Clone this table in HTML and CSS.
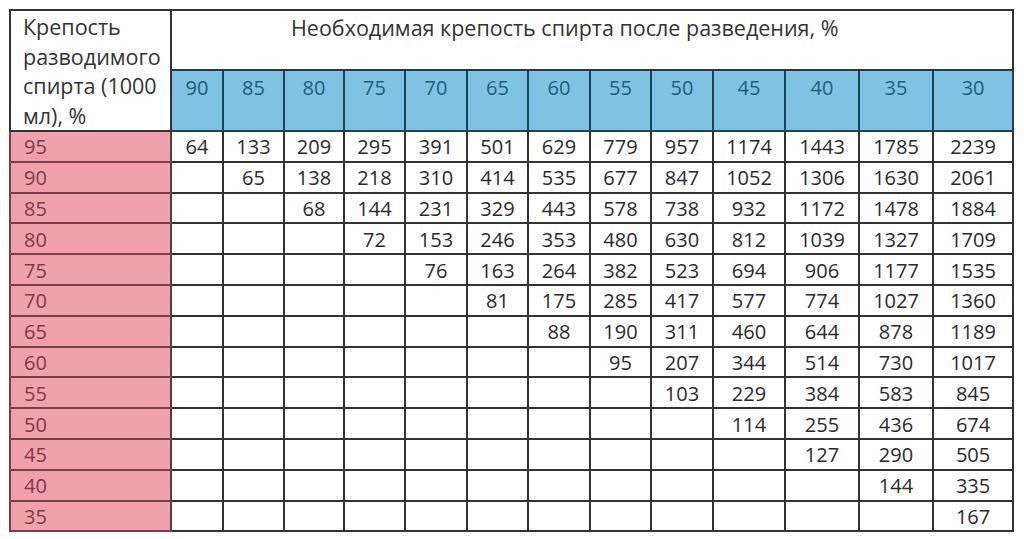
FILE: index.html
```html
<!DOCTYPE html>
<html lang="ru">
<head>
<meta charset="utf-8">
<link rel="stylesheet" href="styles.css">
</head>
<body>
<table class="tbl">
<colgroup>
<col class="c-label"><col class="c52"><col class="c61"><col class="c60"><col class="c61"><col class="c62"><col class="c61"><col class="c62"><col class="c61"><col class="c62"><col class="c72"><col class="c74"><col class="c74"><col class="c80">
</colgroup>
<tr class="r-title">
<th class="corner" rowspan="2">Крепость<br>разводимого<br>спирта (1000<br>мл), %</th>
<th class="title" colspan="13">Необходимая крепость спирта после разведения, %</th>
</tr>
<tr class="r-head">
<th class="h">90</th><th class="h">85</th><th class="h">80</th><th class="h">75</th><th class="h">70</th><th class="h">65</th><th class="h">60</th><th class="h">55</th><th class="h">50</th><th class="h">45</th><th class="h">40</th><th class="h">35</th><th class="h">30</th>
</tr>
<tr class="r-data"><th class="lab">95</th><td>64</td><td>133</td><td>209</td><td>295</td><td>391</td><td>501</td><td>629</td><td>779</td><td>957</td><td>1174</td><td>1443</td><td>1785</td><td>2239</td></tr>
<tr class="r-data"><th class="lab">90</th><td></td><td>65</td><td>138</td><td>218</td><td>310</td><td>414</td><td>535</td><td>677</td><td>847</td><td>1052</td><td>1306</td><td>1630</td><td>2061</td></tr>
<tr class="r-data"><th class="lab">85</th><td></td><td></td><td>68</td><td>144</td><td>231</td><td>329</td><td>443</td><td>578</td><td>738</td><td>932</td><td>1172</td><td>1478</td><td>1884</td></tr>
<tr class="r-data"><th class="lab">80</th><td></td><td></td><td></td><td>72</td><td>153</td><td>246</td><td>353</td><td>480</td><td>630</td><td>812</td><td>1039</td><td>1327</td><td>1709</td></tr>
<tr class="r-data"><th class="lab">75</th><td></td><td></td><td></td><td></td><td>76</td><td>163</td><td>264</td><td>382</td><td>523</td><td>694</td><td>906</td><td>1177</td><td>1535</td></tr>
<tr class="r-data"><th class="lab">70</th><td></td><td></td><td></td><td></td><td></td><td>81</td><td>175</td><td>285</td><td>417</td><td>577</td><td>774</td><td>1027</td><td>1360</td></tr>
<tr class="r-data"><th class="lab">65</th><td></td><td></td><td></td><td></td><td></td><td></td><td>88</td><td>190</td><td>311</td><td>460</td><td>644</td><td>878</td><td>1189</td></tr>
<tr class="r-data"><th class="lab">60</th><td></td><td></td><td></td><td></td><td></td><td></td><td></td><td>95</td><td>207</td><td>344</td><td>514</td><td>730</td><td>1017</td></tr>
<tr class="r-data"><th class="lab">55</th><td></td><td></td><td></td><td></td><td></td><td></td><td></td><td></td><td>103</td><td>229</td><td>384</td><td>583</td><td>845</td></tr>
<tr class="r-data"><th class="lab">50</th><td></td><td></td><td></td><td></td><td></td><td></td><td></td><td></td><td></td><td>114</td><td>255</td><td>436</td><td>674</td></tr>
<tr class="r-data"><th class="lab">45</th><td></td><td></td><td></td><td></td><td></td><td></td><td></td><td></td><td></td><td></td><td>127</td><td>290</td><td>505</td></tr>
<tr class="r-data"><th class="lab">40</th><td></td><td></td><td></td><td></td><td></td><td></td><td></td><td></td><td></td><td></td><td></td><td>144</td><td>335</td></tr>
<tr class="r-data"><th class="lab">35</th><td></td><td></td><td></td><td></td><td></td><td></td><td></td><td></td><td></td><td></td><td></td><td></td><td>167</td></tr>
</table>
</body>
</html>
```
FILE: styles.css
```css
html, body {
  margin: 0;
  padding: 0;
  background: #ffffff;
}
body {
  padding: 9px 0 0 9px;
  font-family: "Open Sans", "Liberation Sans", sans-serif;
  font-size: 20px;
  color: #2b2b2b;
}
.tbl {
  border-collapse: collapse;
  table-layout: fixed;
  width: 1004px;
  border: 2px solid #4a4a4a;
}
.c-label { width: 161px; }
.c52 { width: 52px; }
.c60 { width: 60px; }
.c61 { width: 61px; }
.c62 { width: 62px; }
.c72 { width: 72px; }
.c74 { width: 74px; }
.c80 { width: 80px; }
.tbl th, .tbl td {
  border: 2px solid #333333;
  padding: 0;
  font-weight: normal;
  line-height: 26px;
}
.tbl .r-title { height: 60px; }
.tbl .r-head { height: 61px; }
.tbl .r-data { height: 30.8px; }
.tbl .corner {
  text-align: left;
  vertical-align: top;
  padding: 1px 0 0 12px;
  font-size: 21.5px;
  line-height: 29.5px;
  white-space: nowrap;
  color: #333333;
}
.tbl .title {
  text-align: left;
  vertical-align: top;
  padding: 4px 0 0 119px;
  font-size: 21.5px;
  white-space: nowrap;
  color: #333333;
}
.tbl .h {
  background: #7fc2e3;
  color: #1f5f7e;
  vertical-align: top;
  padding-top: 4px;
  text-align: center;
  border-color: #1d4456;
}
.tbl .lab {
  background: #f0a1ab;
  color: #86384a;
  text-align: left;
  padding: 2px 0 0 13px;
  border-color: #7a3e4a;
  border-right-color: #444444;
}
.tbl td {
  text-align: center;
  vertical-align: middle;
  padding-top: 2px;
}
```
